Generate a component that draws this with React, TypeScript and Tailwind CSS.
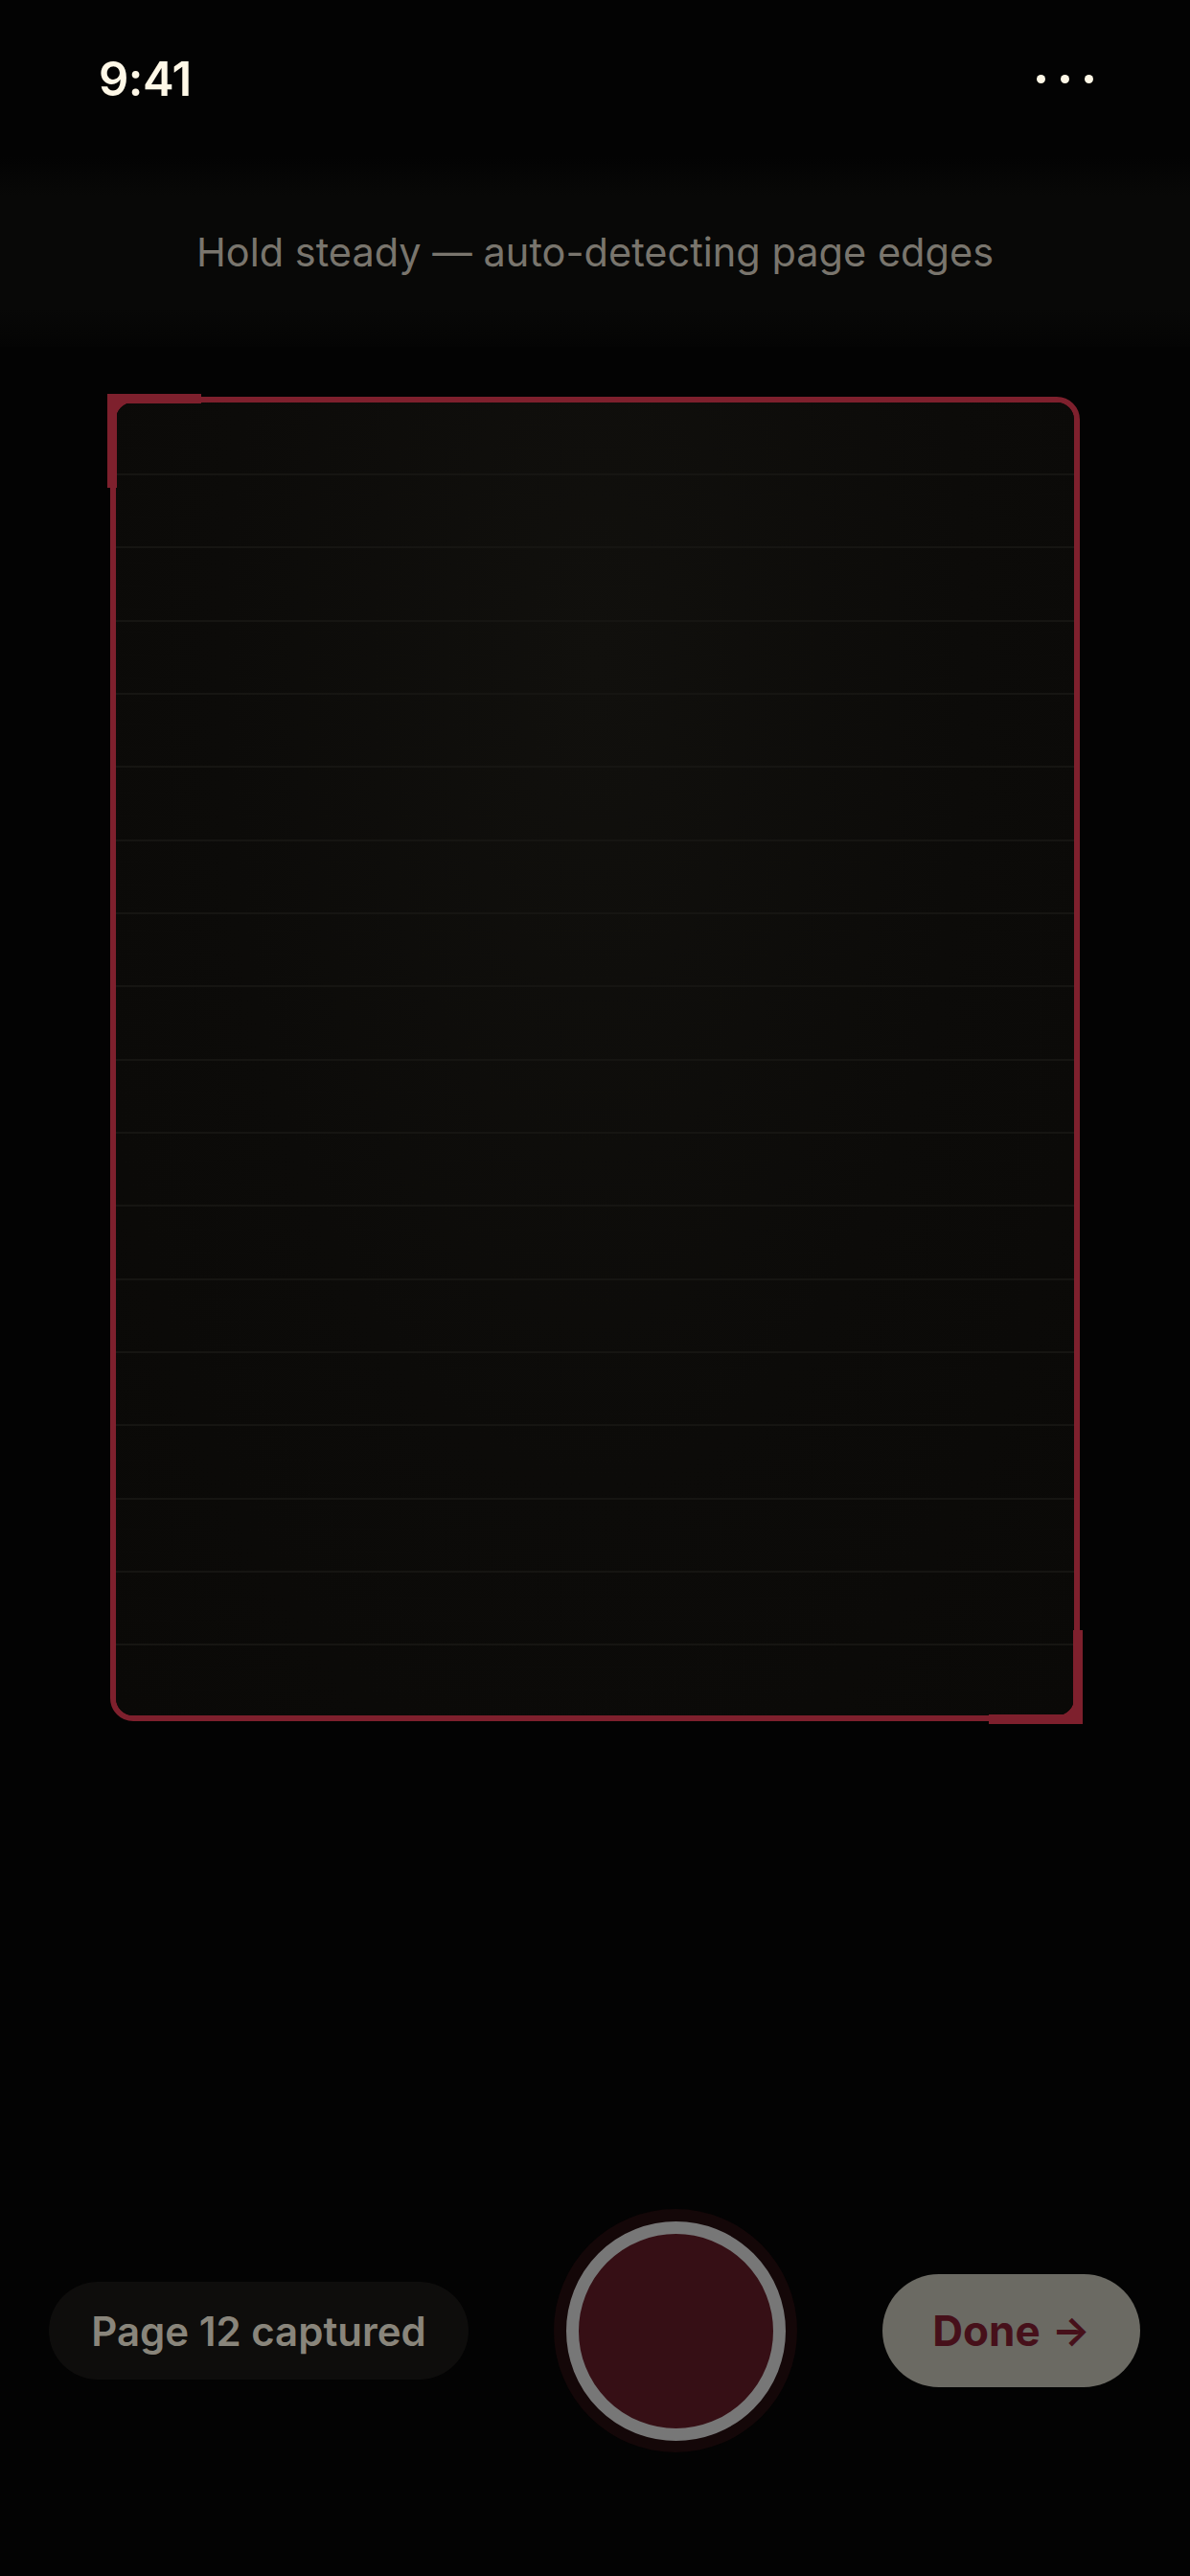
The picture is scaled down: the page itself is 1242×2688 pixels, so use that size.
import React from 'react'

// page scanner capture screen

const RULES = Array.from({ length: 17 }, (_, i) => i)

function StatusBar() {
  return (
    <div className="flex h-[164px] items-center justify-between pl-[103px] pr-[101px]">
      <span className="text-[49px] font-semibold leading-none tracking-[-0.5px] text-[#fff8e7]">9:41</span>
      <div className="flex items-center gap-[16px]">
        <span className="block h-[9px] w-[9px] rounded-full bg-[#fff8e7]" />
        <span className="block h-[9px] w-[9px] rounded-full bg-[#fff8e7]" />
        <span className="block h-[9px] w-[9px] rounded-full bg-[#fff8e7]" />
      </div>
    </div>
  )
}

function ScanFrame() {
  return (
    <div className="relative mx-[115px] mt-[52px] h-[1382px] rounded-[24px] border-[6px] border-[#7e202d]">
      <div className="h-full overflow-hidden rounded-[18px] bg-[radial-gradient(ellipse_at_50%_20%,#11100d_0%,#0c0b09_55%,#0a0907_100%)]">
        <div className="flex flex-col gap-[74.33px] pt-[74px]">
          {RULES.map(i => (
            <div key={i} className="h-[2px] w-full bg-[#161512]" />
          ))}
        </div>
      </div>
      {/* corner brackets */}
      <div className="absolute -left-[9px] -top-[9px] h-[98px] w-[98px] border-l-[10px] border-t-[10px] border-[#7e202d]" />
      <div className="absolute -bottom-[9px] -right-[9px] h-[98px] w-[98px] border-b-[10px] border-r-[10px] border-[#7e202d]" />
    </div>
  )
}

function Controls() {
  return (
    <div className="mt-[509px] flex h-[254px] items-center gap-[89px] px-[51px]">
      <div className="flex h-[102px] w-[438px] items-center justify-center rounded-full bg-[#0e0d0c]">
        <span className="text-[42px] font-semibold text-[#89857b]">Page 12 captured</span>
      </div>
      <button className="flex h-[254px] w-[254px] items-center justify-center rounded-full bg-[#140708]">
        <span className="block h-[229px] w-[229px] rounded-full border-[13px] border-[#777777] bg-[#360f15]" />
      </button>
      <button className="flex h-[118px] w-[269px] items-center justify-center gap-[12px] rounded-full bg-[#6b6a63]">
        <span className="text-[44px] font-bold leading-none text-[#46101a]">Done</span>
        <span className="text-[42px] font-bold leading-none text-[#46101a]">→</span>
      </button>
    </div>
  )
}

export default function App() {
  return (
    <div className="flex min-h-[2688px] w-[1242px] flex-col bg-[#030303] font-['Inter','Noto_Sans',sans-serif]">
      <StatusBar />
      <div className="flex h-[198px] items-center justify-center bg-[linear-gradient(to_bottom,#030303_0%,#080807_20%,#080807_80%,#040404_100%)]">
        <p className="text-[41.5px] font-normal text-[#79756d]">Hold steady — auto-detecting page edges</p>
      </div>
      <ScanFrame />
      <Controls />
    </div>
  )
}
